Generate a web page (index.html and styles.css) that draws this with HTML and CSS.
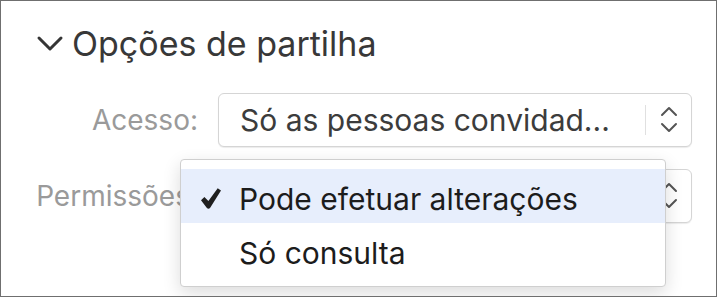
FILE: index.html
```html
<!DOCTYPE html>
<html lang="pt">
<head>
    <meta charset="UTF-8">
    <title>Opções de partilha</title>
    <link rel="stylesheet" href="styles.css">
</head>
<body>
    <div class="panel">
        <div class="section-header">
            <svg class="disclosure" width="28" height="18" viewBox="0 0 28 18">
                <polyline points="3,3 14,14 25,3" fill="none" stroke="#353535" stroke-width="3" stroke-linecap="round" stroke-linejoin="round"/>
            </svg>
            <h2 class="section-title">Opções de partilha</h2>
        </div>

        <div class="form">
            <label class="field-label">Acesso:</label>
            <div class="popup">
                <span class="popup-value">Só as pessoas convidad...</span>
                <span class="popup-divider"></span>
                <span class="popup-arrows">
                    <svg width="18" height="30" viewBox="0 0 18 30">
                        <polyline points="2,10 9,3 16,10" fill="none" stroke="#555" stroke-width="2" stroke-linecap="round" stroke-linejoin="round"/>
                        <polyline points="2,19 9,26 16,19" fill="none" stroke="#555" stroke-width="2" stroke-linecap="round" stroke-linejoin="round"/>
                    </svg>
                </span>
            </div>

            <label class="field-label">Permissões:</label>
            <div class="popup open">
                <span class="popup-value">Pode efetuar alterações</span>
                <span class="popup-divider"></span>
                <span class="popup-arrows">
                    <svg width="18" height="30" viewBox="0 0 18 30">
                        <polyline points="2,10 9,3 16,10" fill="none" stroke="#555" stroke-width="2" stroke-linecap="round" stroke-linejoin="round"/>
                        <polyline points="2,19 9,26 16,19" fill="none" stroke="#555" stroke-width="2" stroke-linecap="round" stroke-linejoin="round"/>
                    </svg>
                </span>
            </div>
        </div>

        <!-- open menu of the Permissões popup -->
        <ul class="menu">
            <li class="menu-item selected">
                <span class="menu-check">
                    <svg width="20" height="21" viewBox="0 0 20 21">
                        <path d="M0 12.2 L3.4 8.9 L7.4 13.1 L16.7 0.2 L20 2.5 L9.2 19.7 Q7.6 21.6 5.9 19.9 Z" fill="#1f1f1f"/>
                    </svg>
                </span>
                <span class="menu-text">Pode efetuar alterações</span>
            </li>
            <li class="menu-item">
                <span class="menu-check"></span>
                <span class="menu-text">Só consulta</span>
            </li>
        </ul>
    </div>
</body>
</html>
```

FILE: styles.css
```css
body {
    margin: 0;
    background: #fff;
    font-family: Inter, "Noto Sans", sans-serif;
}

.panel {
    position: relative;
    box-sizing: border-box;
    width: 717px;
    height: 297px;
    border: 1px solid #6f6f6f;
    padding-top: 23px;
    overflow: hidden;
}

.section-header {
    display: flex;
    align-items: center;
    height: 40px;
    padding-left: 35px;
}

.disclosure {
    display: block;
    margin-right: 8px;
}

.section-title {
    margin: 0;
    font-size: 34px;
    font-weight: 400;
    line-height: 40px;
    color: #383838;
}

.form {
    display: grid;
    grid-template-columns: 197px 474px;
    column-gap: 20px;
    row-gap: 22px;
    align-items: center;
    margin-top: 29px;
}

.field-label {
    text-align: right;
    font-size: 28px;
    color: #9a9a9a;
}

.popup {
    display: flex;
    align-items: center;
    box-sizing: border-box;
    height: 54px;
    border: 1px solid #d5d5d5;
    border-radius: 6px;
    box-shadow: 0 1px 1px rgba(0, 0, 0, 0.08);
    background: #fff;
}

.popup-value {
    flex: 1;
    padding-left: 21px;
    font-size: 30px;
    color: #3c3c3c;
    white-space: nowrap;
    overflow: hidden;
}

/* value sits under the open menu */
.popup.open .popup-value {
    visibility: hidden;
}

.popup-divider {
    width: 1px;
    height: 30px;
    background: #e0e0e0;
}

.popup-arrows {
    display: flex;
    justify-content: center;
    width: 45px;
}

.popup-arrows svg {
    display: block;
}

.menu {
    position: absolute;
    left: 179px;
    top: 158px;
    box-sizing: border-box;
    width: 486px;
    height: 128px;
    margin: 0;
    padding: 9px 0 0;
    list-style: none;
    background: #fff;
    border: 1px solid #cfcfcf;
    border-radius: 4px;
    box-shadow: 0 6px 18px rgba(0, 0, 0, 0.14);
}

.menu-item {
    display: flex;
    align-items: center;
    box-sizing: border-box;
    height: 54px;
    padding: 5px 0 0 20px;
    font-size: 30px;
    color: #1c1c1c;
}

.menu-item.selected {
    background: #e7eefc;
}

.menu-check {
    display: flex;
    width: 20px;
    margin-right: 18px;
}
```
